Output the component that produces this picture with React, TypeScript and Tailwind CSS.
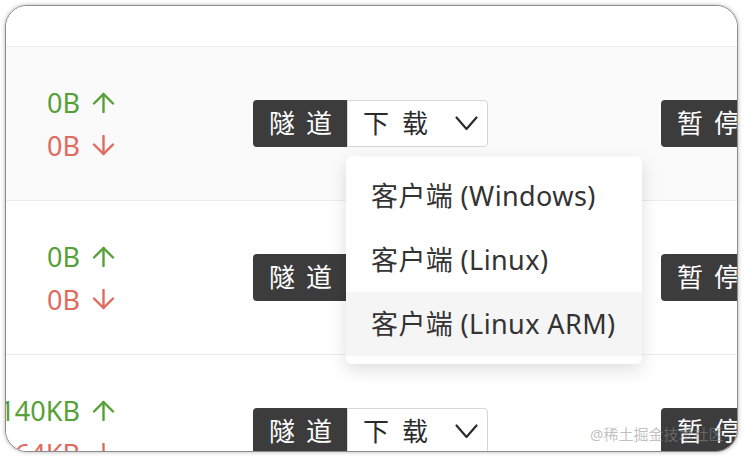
import React from 'react';

const font = { fontFamily: '"Noto Sans", "Noto Sans CJK SC", sans-serif' };

const ArrowUp = () => (
  <svg width="23" height="21" viewBox="0 0 23 21" fill="none" stroke="currentColor" strokeWidth="2.4" strokeLinecap="round" strokeLinejoin="round">
    <path d="M11.5 2 V20" />
    <path d="M2 11.5 L11.5 2 L21 11.5" />
  </svg>
);

const ArrowDown = () => (
  <svg width="23" height="21" viewBox="0 0 23 21" fill="none" stroke="currentColor" strokeWidth="2.4" strokeLinecap="round" strokeLinejoin="round">
    <path d="M11.5 1 V19" />
    <path d="M2 9.5 L11.5 19 L21 9.5" />
  </svg>
);

const Chevron = () => (
  <svg width="23" height="15" viewBox="0 0 23 15" fill="none" stroke="#2b2b2b" strokeWidth="2.2" strokeLinecap="round" strokeLinejoin="round">
    <path d="M1.5 1.5 L11.5 13 L21.5 1.5" />
  </svg>
);

interface RowProps {
  up: string;
  down: string;
  shaded?: boolean;
  menu?: boolean;
}

const items = ['客户端 (Windows)', '客户端 (Linux)', '客户端 (Linux ARM)'];

const Row = ({ up, down, shaded = false, menu = false }: RowProps) => {
  return (
    <div className={`flex h-[154px] shrink-0 items-center border-b border-[#ececec] ${shaded ? 'bg-[#fafafa]' : 'bg-white'}`}>
      {/* traffic */}
      <div className="flex w-[109px] shrink-0 flex-col items-end text-[27px] leading-[43px]">
        <div className="flex items-center gap-[12px] whitespace-nowrap text-[#56a038]">
          <span>{up}</span>
          <ArrowUp />
        </div>
        <div className="flex items-center gap-[12px] whitespace-nowrap text-[#e06a5e]">
          <span>{down}</span>
          <ArrowDown />
        </div>
      </div>

      {/* tunnel + download */}
      <div className="relative ml-[138px] flex h-[47px] shrink-0">
        <div className="flex w-[94px] items-center rounded-l-[4px] bg-[#3c3c3c] pl-[16px] text-[26px] tracking-[11px] text-white">
          隧道
        </div>
        <div className="flex w-[141px] items-center justify-between rounded-r-[4px] border border-[#d6d6d6] bg-white pl-[15px] pr-[9px] text-[26px] tracking-[13px] text-[#2b2b2b]">
          <span>下载</span>
          <Chevron />
        </div>
        {menu && (
          <div className="absolute left-[93px] top-[56px] z-10 w-[296px] rounded-[6px] bg-white py-[8px] shadow-[0_6px_18px_rgba(0,0,0,0.13)]">
            {items.map((t, i) => (
              <div
                key={t}
                className={`flex h-[64px] items-center whitespace-nowrap pl-[25px] text-[27px] tracking-[0.4px] text-[#333333] ${i === 2 ? 'bg-[#f5f5f5]' : ''}`}
              >
                {t}
              </div>
            ))}
          </div>
        )}
      </div>

      {/* pause */}
      <div className="ml-[173px] flex h-[47px] w-[94px] shrink-0 items-center rounded-[4px] bg-[#3c3c3c] pl-[16px] text-[26px] tracking-[11px] text-white">
        暂停
      </div>
    </div>
  );
};

export default function App() {
  return (
    <div className="h-[458px] w-[744px] bg-white pb-[6px] pl-[5px] pr-[6px] pt-[5px]" style={font}>
      <div className="relative flex h-full flex-col overflow-hidden rounded-[22px] border border-[#8c8c8c] bg-white shadow-[0_0_4px_rgba(0,0,0,0.3)]">
        <div className="h-[41px] shrink-0 border-b border-[#ececec] bg-white" />
        <Row up="0B" down="0B" shaded menu />
        <Row up="0B" down="0B" />
        <Row up="140KB" down="64KB" />

        {/* watermark */}
        <div className="absolute left-[584px] top-[417px] z-20 whitespace-nowrap text-[15px] text-[rgba(140,140,140,0.55)]">
          @稀土掘金技术社区
        </div>
      </div>
    </div>
  );
}
